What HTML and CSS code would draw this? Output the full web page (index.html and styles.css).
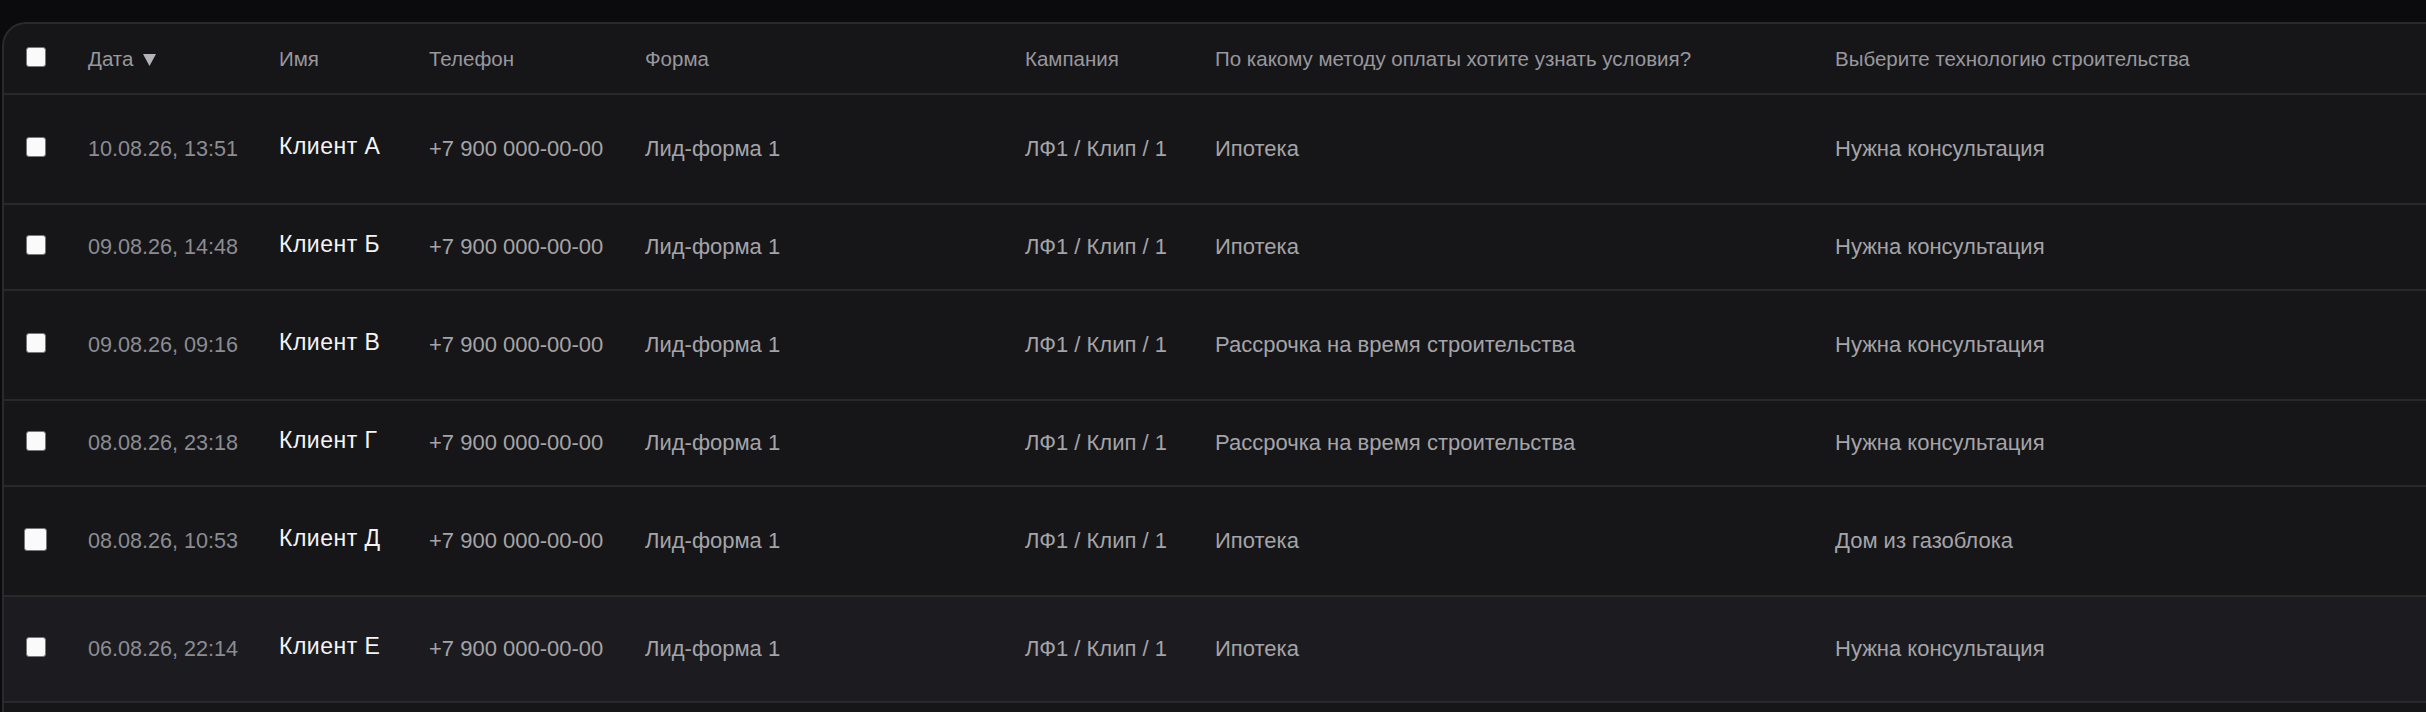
FILE: index.html
```html
<!DOCTYPE html>
<html lang="ru">
<head>
  <meta charset="UTF-8">
  <meta name="viewport" content="width=device-width, initial-scale=1.0">
  <title>Лиды</title>
  <link rel="stylesheet" href="styles.css">
</head>
<body>
  <div class="card">
    <table class="leads">
      <colgroup>
        <col class="col-check">
        <col class="col-date">
        <col class="col-name">
        <col class="col-phone">
        <col class="col-form">
        <col class="col-campaign">
        <col class="col-payment">
        <col class="col-tech">
      </colgroup>
      <thead>
        <tr class="head-row">
          <th><input type="checkbox" class="check"></th>
          <th>Дата<svg class="sort-arrow" width="13" height="12" viewBox="0 0 13 12"><path d="M0 0 H13 L6.5 12 Z" fill="#b3b3b8"/></svg></th>
          <th>Имя</th>
          <th>Телефон</th>
          <th>Форма</th>
          <th>Кампания</th>
          <th>По какому методу оплаты хотите узнать условия?</th>
          <th>Выберите технологию строительства</th>
        </tr>
      </thead>
      <tbody>
        <tr class="row row-tall">
          <td><input type="checkbox" class="check"></td>
          <td class="date">10.08.26, 13:51</td>
          <td><span class="name">Клиент А</span></td>
          <td>+7 900 000-00-00</td>
          <td>Лид-форма 1</td>
          <td>ЛФ1 / Клип / 1</td>
          <td>Ипотека</td>
          <td>Нужна консультация</td>
        </tr>
        <tr class="row row-short">
          <td><input type="checkbox" class="check"></td>
          <td class="date">09.08.26, 14:48</td>
          <td><span class="name">Клиент Б</span></td>
          <td>+7 900 000-00-00</td>
          <td>Лид-форма 1</td>
          <td>ЛФ1 / Клип / 1</td>
          <td>Ипотека</td>
          <td>Нужна консультация</td>
        </tr>
        <tr class="row row-tall">
          <td><input type="checkbox" class="check"></td>
          <td class="date">09.08.26, 09:16</td>
          <td><span class="name">Клиент В</span></td>
          <td>+7 900 000-00-00</td>
          <td>Лид-форма 1</td>
          <td>ЛФ1 / Клип / 1</td>
          <td>Рассрочка на время строительства</td>
          <td>Нужна консультация</td>
        </tr>
        <tr class="row row-short">
          <td><input type="checkbox" class="check"></td>
          <td class="date">08.08.26, 23:18</td>
          <td><span class="name">Клиент Г</span></td>
          <td>+7 900 000-00-00</td>
          <td>Лид-форма 1</td>
          <td>ЛФ1 / Клип / 1</td>
          <td>Рассрочка на время строительства</td>
          <td>Нужна консультация</td>
        </tr>
        <tr class="row row-tall">
          <td><input type="checkbox" class="check check-big"></td>
          <td class="date">08.08.26, 10:53</td>
          <td><span class="name">Клиент Д</span></td>
          <td>+7 900 000-00-00</td>
          <td>Лид-форма 1</td>
          <td>ЛФ1 / Клип / 1</td>
          <td>Ипотека</td>
          <td>Дом из газоблока</td>
        </tr>
        <tr class="row row-last row-hover">
          <td><input type="checkbox" class="check"></td>
          <td class="date">06.08.26, 22:14</td>
          <td><span class="name">Клиент Е</span></td>
          <td>+7 900 000-00-00</td>
          <td>Лид-форма 1</td>
          <td>ЛФ1 / Клип / 1</td>
          <td>Ипотека</td>
          <td>Нужна консультация</td>
        </tr>
      </tbody>
    </table>
  </div>
</body>
</html>
```

FILE: styles.css
```css
body {
  margin: 0;
  background-color: #0b0b0e;
  font-family: 'Liberation Sans', Arial, sans-serif;
  overflow: hidden;
}

.card {
  margin: 22px 0 0 2px;
  width: 2700px;
  height: 720px;
  background-color: #161618;
  border: 2px solid #2a2a2d;
  border-right: 0;
  border-bottom: 0;
  border-top-left-radius: 24px;
}

.leads {
  border-collapse: collapse;
  table-layout: fixed;
  width: 100%;
}

.col-check { width: 84px; }
.col-date { width: 191px; }
.col-name { width: 150px; }
.col-phone { width: 216px; }
.col-form { width: 380px; }
.col-campaign { width: 190px; }
.col-payment { width: 620px; }

.leads th,
.leads td {
  padding: 0;
  text-align: left;
  vertical-align: middle;
  white-space: nowrap;
  border-bottom: 2px solid #29292c;
}

.leads th:first-child,
.leads td:first-child {
  padding-left: 22px;
}

.head-row {
  height: 70px;
}

.leads th {
  font-size: 20.5px;
  font-weight: normal;
  color: #98989e;
}

.sort-arrow {
  margin-left: 10px;
}

.leads td {
  font-size: 22px;
  color: #a4a4a9;
}

.row-tall { height: 110px; }
.row-short { height: 86px; }
.row-last { height: 106px; }

.row-hover {
  background-color: #1c1c20;
}

.leads td.date {
  font-size: 21.6px;
  color: #8c8c91;
}

.name {
  display: inline-block;
  padding-bottom: 5px;
  font-size: 23px;
  letter-spacing: 0.5px;
  color: #f4f4f4;
}

.check {
  appearance: none;
  display: block;
  width: 20px;
  height: 20px;
  margin: 0 0 4px 0;
  background-color: #fafafa;
  border: 1.5px solid #77777c;
  border-radius: 3px;
}

.check-big {
  width: 23px;
  height: 23px;
  margin-left: -2px;
}
```
